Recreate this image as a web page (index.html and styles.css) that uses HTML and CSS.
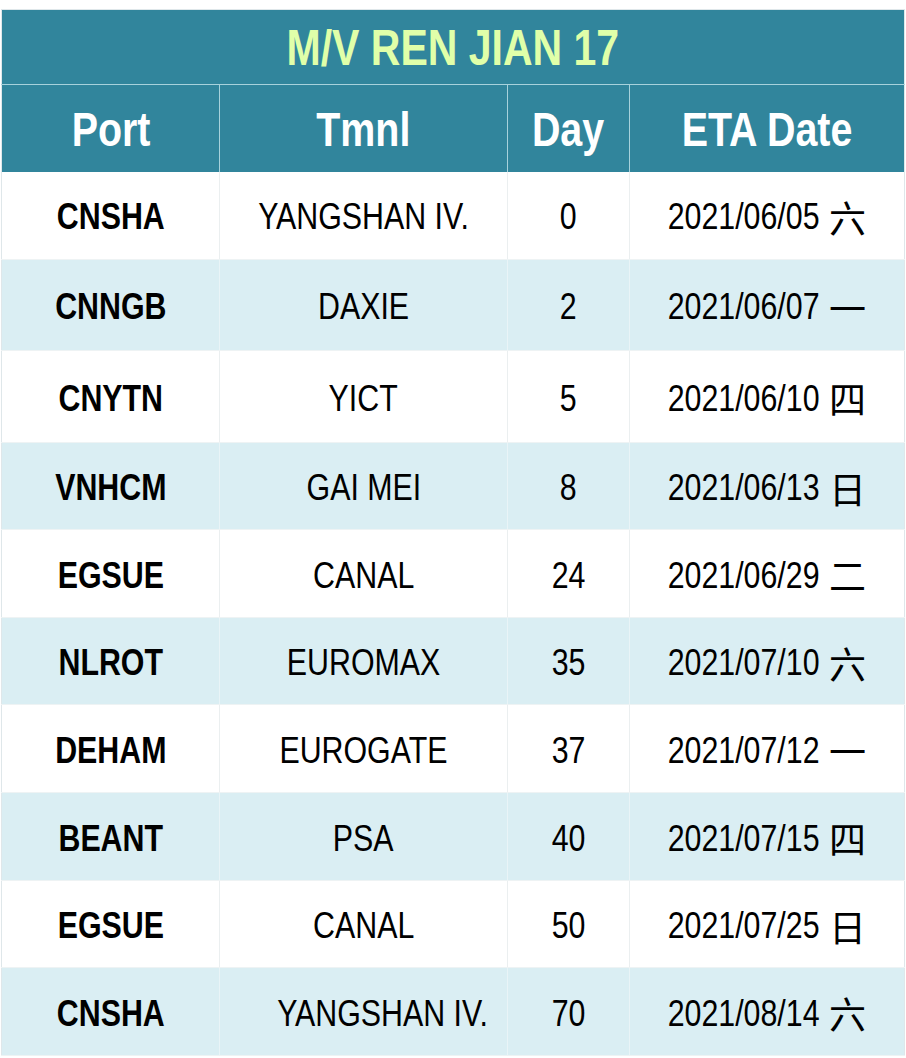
FILE: index.html
```html
<!DOCTYPE html>
<html lang="en">
<head>
<meta charset="utf-8">
<title>M/V REN JIAN 17</title>
<link rel="stylesheet" href="styles.css">
</head>
<body>
<table class="sched">
  <colgroup>
    <col class="c-port"><col class="c-tmnl"><col class="c-day"><col class="c-eta">
  </colgroup>
  <thead>
    <tr class="title-row"><th colspan="4"><span class="nar">M/V REN JIAN 17</span></th></tr>
    <tr class="head-row">
      <th><span class="nar">Port</span></th>
      <th><span class="nar">Tmnl</span></th>
      <th><span class="nar">Day</span></th>
      <th><span class="nar">ETA Date</span></th>
    </tr>
  </thead>
  <tbody>
    <tr class="h88"><td class="port"><span class="nar">CNSHA</span></td><td><span class="nar">YANGSHAN IV.</span></td><td><span class="nar">0</span></td><td><span class="date"><span class="nar num">2021/06/05</span><span class="wd">六</span></span></td></tr>
    <tr class="h91"><td class="port"><span class="nar">CNNGB</span></td><td><span class="nar">DAXIE</span></td><td><span class="nar">2</span></td><td><span class="date"><span class="nar num">2021/06/07</span><span class="wd">一</span></span></td></tr>
    <tr class="h92"><td class="port"><span class="nar">CNYTN</span></td><td><span class="nar">YICT</span></td><td><span class="nar">5</span></td><td><span class="date"><span class="nar num">2021/06/10</span><span class="wd">四</span></span></td></tr>
    <tr class="h87"><td class="port"><span class="nar">VNHCM</span></td><td><span class="nar">GAI MEI</span></td><td><span class="nar">8</span></td><td><span class="date"><span class="nar num">2021/06/13</span><span class="wd">日</span></span></td></tr>
    <tr class="h88"><td class="port"><span class="nar">EGSUE</span></td><td><span class="nar">CANAL</span></td><td><span class="nar">24</span></td><td><span class="date"><span class="nar num">2021/06/29</span><span class="wd">二</span></span></td></tr>
    <tr class="h87"><td class="port"><span class="nar">NLROT</span></td><td><span class="nar">EUROMAX</span></td><td><span class="nar">35</span></td><td><span class="date"><span class="nar num">2021/07/10</span><span class="wd">六</span></span></td></tr>
    <tr class="h88"><td class="port"><span class="nar">DEHAM</span></td><td><span class="nar">EUROGATE</span></td><td><span class="nar">37</span></td><td><span class="date"><span class="nar num">2021/07/12</span><span class="wd">一</span></span></td></tr>
    <tr class="h88"><td class="port"><span class="nar">BEANT</span></td><td><span class="nar">PSA</span></td><td><span class="nar">40</span></td><td><span class="date"><span class="nar num">2021/07/15</span><span class="wd">四</span></span></td></tr>
    <tr class="h87"><td class="port"><span class="nar">EGSUE</span></td><td><span class="nar">CANAL</span></td><td><span class="nar">50</span></td><td><span class="date"><span class="nar num">2021/07/25</span><span class="wd">日</span></span></td></tr>
    <tr class="h88"><td class="port"><span class="nar">CNSHA</span></td><td class="shift"><span class="nar">YANGSHAN IV.</span></td><td><span class="nar">70</span></td><td><span class="date"><span class="nar num">2021/08/14</span><span class="wd">六</span></span></td></tr>
  </tbody>
</table>
</body>
</html>
```

FILE: styles.css
```css
html, body {
  margin: 0;
  padding: 0;
  background: #ffffff;
}

body {
  font-family: "Liberation Sans", Arial, sans-serif;
  color: #000000;
}

.sched {
  margin: 9px 0 0 1px;
  width: 903px;
  border-collapse: collapse;
  table-layout: fixed;
  border: 1px solid #dfe7ea;
}

.c-port { width: 218px; }
.c-tmnl { width: 288px; }
.c-day  { width: 122px; }
.c-eta  { width: 275px; }

.nar {
  display: inline-block;
  transform: scaleX(0.82);
  transform-origin: center;
  white-space: nowrap;
}

th {
  background: #31859c;
  padding: 0;
  text-align: center;
  font-weight: bold;
}

.title-row { height: 75px; }
.title-row th {
  color: #e0ffa9;
  font-size: 50px;
  padding-top: 2px;
  border-bottom: 1px solid #a8d2dc;
}

.head-row { height: 87px; }
.head-row th {
  color: #ffffff;
  font-size: 48px;
  padding-top: 2px;
  border-right: 1px solid #a8d2dc;
}
.head-row th:last-child { border-right: none; }

td {
  padding: 4px 0 0 0;
  text-align: center;
  vertical-align: middle;
  font-size: 37px;
  border-right: 1px solid #ebeff0;
  border-bottom: 1px solid #eef3f4;
}
td:last-child { border-right: none; }

tbody tr:nth-child(even) td {
  background: #daeef3;
  border-right-color: #e9f4f7;
}

.h87 { height: 87px; }
.h88 { height: 88px; }
.h91 { height: 91px; }
.h92 { height: 92px; }

.port { font-weight: bold; }

.shift { padding-left: 34px; }

.date {
  display: inline-flex;
  align-items: center;
}

.num {
  margin: 0 -0.45em;
}

.wd {
  font-family: "Noto Sans CJK SC", "Noto Sans CJK TC", sans-serif;
  font-size: 37px;
  font-weight: normal;
  margin-left: 9px;
  line-height: 1;
}
```
